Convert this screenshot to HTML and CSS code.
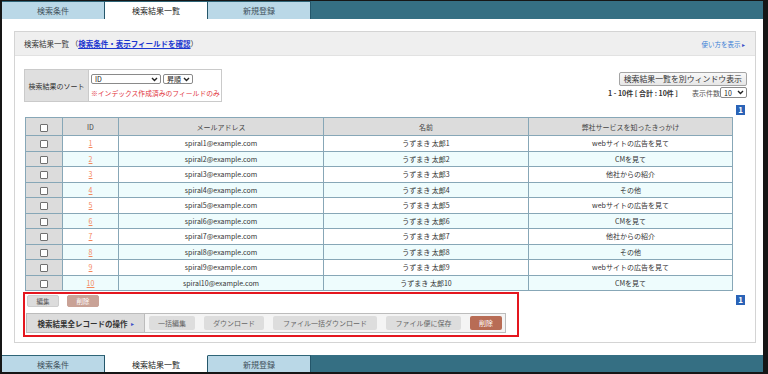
FILE: index.html
```html
<!DOCTYPE html>
<html lang="ja">

<head>
    <meta charset="UTF-8">
    <meta name="viewport" content="width=device-width, initial-scale=1.0">
    <title>検索結果一覧</title>
    <link rel="stylesheet" href="styles.css">
</head>

<body>
    <div id="frame">
        <div class="tabBar top">
            <div class="tab">検索条件</div>
            <div class="tab active">検索結果一覧</div>
            <div class="tab">新規登録</div>
        </div>

        <div id="main">
            <div class="panel">
                <div class="panelHead">
                    <div class="title">検索結果一覧 （<a href="#">検索条件・表示フィールドを確認</a>）</div>
                    <a class="help" href="#">使い方を表示 <span class="tri">▸</span></a>
                </div>

                <div class="panelBody">
                    <div class="topRow">
                        <div class="sortBox">
                            <div class="sortLabel">検索結果のソート</div>
                            <div class="sortField">
                                <div class="selects">
                                    <div class="select wide">ID
                                        <svg width="7" height="5" viewBox="0 0 7 5"><path d="M1 1 L3.5 3.5 L6 1" fill="none" stroke="#222" stroke-width="1.4"/></svg>
                                    </div>
                                    <div class="select narrow">昇順
                                        <svg width="7" height="5" viewBox="0 0 7 5"><path d="M1 1 L3.5 3.5 L6 1" fill="none" stroke="#222" stroke-width="1.4"/></svg>
                                    </div>
                                </div>
                                <div class="note">※インデックス作成済みのフィールドのみ</div>
                            </div>
                        </div>

                        <div class="rightTools">
                            <div class="winBtn">検索結果一覧を別ウィンドウ表示</div>
                            <div class="countRow">
                                <b>1 - 10件 [ 合計 : 10件 ]</b>
                                <span class="perPage">表示件数</span>
                                <div class="select num">10
                                    <svg width="7" height="5" viewBox="0 0 7 5"><path d="M1 1 L3.5 3.5 L6 1" fill="none" stroke="#222" stroke-width="1.4"/></svg>
                                </div>
                            </div>
                        </div>
                    </div>

                    <div class="pager"><span class="pageNo">1</span></div>

                    <table class="result">
                        <tr>
                            <th class="chk"><span class="box"></span></th>
                            <th class="id">ID</th>
                            <th>メールアドレス</th>
                            <th>名前</th>
                            <th>弊社サービスを知ったきっかけ</th>
                        </tr>
                        <tr>
                            <td class="chk"><span class="box"></span></td>
                            <td><a href="#">1</a></td>
                            <td>spiral1@example.com</td>
                            <td>うずまき 太郎1</td>
                            <td>webサイトの広告を見て</td>
                        </tr>
                        <tr class="alt">
                            <td class="chk"><span class="box"></span></td>
                            <td><a href="#">2</a></td>
                            <td>spiral2@example.com</td>
                            <td>うずまき 太郎2</td>
                            <td>CMを見て</td>
                        </tr>
                        <tr>
                            <td class="chk"><span class="box"></span></td>
                            <td><a href="#">3</a></td>
                            <td>spiral3@example.com</td>
                            <td>うずまき 太郎3</td>
                            <td>他社からの紹介</td>
                        </tr>
                        <tr class="alt">
                            <td class="chk"><span class="box"></span></td>
                            <td><a href="#">4</a></td>
                            <td>spiral4@example.com</td>
                            <td>うずまき 太郎4</td>
                            <td>その他</td>
                        </tr>
                        <tr>
                            <td class="chk"><span class="box"></span></td>
                            <td><a href="#">5</a></td>
                            <td>spiral5@example.com</td>
                            <td>うずまき 太郎5</td>
                            <td>webサイトの広告を見て</td>
                        </tr>
                        <tr class="alt">
                            <td class="chk"><span class="box"></span></td>
                            <td><a href="#">6</a></td>
                            <td>spiral6@example.com</td>
                            <td>うずまき 太郎6</td>
                            <td>CMを見て</td>
                        </tr>
                        <tr>
                            <td class="chk"><span class="box"></span></td>
                            <td><a href="#">7</a></td>
                            <td>spiral7@example.com</td>
                            <td>うずまき 太郎7</td>
                            <td>他社からの紹介</td>
                        </tr>
                        <tr class="alt">
                            <td class="chk"><span class="box"></span></td>
                            <td><a href="#">8</a></td>
                            <td>spiral8@example.com</td>
                            <td>うずまき 太郎8</td>
                            <td>その他</td>
                        </tr>
                        <tr>
                            <td class="chk"><span class="box"></span></td>
                            <td><a href="#">9</a></td>
                            <td>spiral9@example.com</td>
                            <td>うずまき 太郎9</td>
                            <td>webサイトの広告を見て</td>
                        </tr>
                        <tr class="alt">
                            <td class="chk"><span class="box"></span></td>
                            <td><a href="#">10</a></td>
                            <td>spiral10@example.com</td>
                            <td>うずまき 太郎10</td>
                            <td>CMを見て</td>
                        </tr>
                    </table>

                    <div class="bottomRow">
                        <div class="redBox">
                            <div class="editRow">
                                <div class="smallBtn">編集</div>
                                <div class="smallBtn off">削除</div>
                            </div>
                            <div class="opsBar">
                                <div class="opsLabel">検索結果全レコードの操作 <span class="tri">▸</span></div>
                                <div class="opsBtns">
                                    <div class="opBtn w1">一括編集</div>
                                    <div class="opBtn w2">ダウンロード</div>
                                    <div class="opBtn w3">ファイル一括ダウンロード</div>
                                    <div class="opBtn w4">ファイル便に保存</div>
                                    <div class="opBtn del">削除</div>
                                </div>
                            </div>
                        </div>
                        <div class="pager low"><span class="pageNo">1</span></div>
                    </div>
                </div>
            </div>
        </div>

        <div class="tabBar bottom">
            <div class="tab">検索条件</div>
            <div class="tab active">検索結果一覧</div>
            <div class="tab">新規登録</div>
        </div>
    </div>
</body>

</html>
```

FILE: styles.css
```css
* {
    margin: 0;
    padding: 0;
    box-sizing: border-box;
}

body {
    font-family: "Noto Sans CJK JP", "Noto Sans", sans-serif;
    color: #333;
    background: #161616;
}

#frame {
    width: 768px;
    height: 374px;
    border-style: solid;
    border-color: #161616;
    border-width: 1px 5px 2px 2px;
    background: #fff;
    display: flex;
    flex-direction: column;
}

/* tabs */
.tabBar {
    height: 18px;
    flex-shrink: 0;
    background-color: #356f83;
    display: flex;
}

.tabBar.bottom {
    height: 17px;
}

.tab {
    width: 103px;
    border-right: 1px solid #24566a;
    background-color: #bad8e7;
    color: #3e4f5a;
    font-size: 8px;
    display: flex;
    align-items: center;
    justify-content: center;
}

.tabBar.top .tab {
    border-top: 1px solid #2f6578;
}

.tabBar.bottom .tab {
    border-top: 1px solid #2f6578;
}

.tab.active {
    background-color: #fff;
    color: #222;
}

.tabBar.bottom .tab.active {
    border-top-color: #fff;
}

#main {
    flex: 1;
    padding: 12px 7px 12px 12px;
}

.panel {
    height: 100%;
    border: 1px solid #d4d4d4;
}

.panelHead {
    height: 24px;
    background-color: #efefef;
    border-bottom: 1px solid #e2e2e2;
    display: flex;
    justify-content: space-between;
    align-items: center;
    padding: 0 10px 0 9px;
}

.title {
    font-size: 7.5px;
    color: #333;
}

.title a {
    color: #1b36cf;
    font-weight: bold;
}

.help {
    font-size: 6.5px;
    color: #3b7fd6;
    text-decoration: none;
}

.help .tri {
    color: #3a4fc8;
    font-size: 6px;
}

.panelBody {
    padding: 13px 8px 0 9px;
}

/* sort + count */
.topRow {
    display: flex;
    justify-content: space-between;
    height: 33px;
}

.sortBox {
    width: 198px;
    height: 33px;
    border: 1px solid #cacaca;
    display: flex;
}

.sortLabel {
    width: 64px;
    background-color: #dfdfdf;
    border-right: 1px solid #cacaca;
    font-size: 7px;
    color: #333;
    display: flex;
    align-items: center;
    justify-content: center;
}

.sortField {
    padding: 4px 0 0 2px;
}

.selects {
    display: flex;
    gap: 2px;
}

.select {
    height: 10px;
    border: 1px solid #8a8a8a;
    border-radius: 2px;
    background: #fff;
    font-size: 7px;
    line-height: 8px;
    padding-left: 3px;
    padding-right: 2px;
    display: flex;
    justify-content: space-between;
    align-items: center;
    color: #222;
}

.select.wide {
    width: 70px;
}

.select.narrow {
    width: 30px;
}

.note {
    margin-top: 4px;
    font-size: 6.8px;
    color: #e2343c;
    white-space: nowrap;
}

.rightTools {
    display: flex;
    flex-direction: column;
    align-items: flex-end;
    padding-top: 3px;
}

.winBtn {
    height: 14px;
    border: 1px solid #a4a4a4;
    border-radius: 2px;
    background: linear-gradient(#f8f8f8, #e6e6e6);
    font-size: 7.9px;
    line-height: 12px;
    padding: 0 4px;
    color: #333;
}

.countRow {
    margin-top: 1px;
    display: flex;
    align-items: center;
    font-size: 7px;
}

.countRow b {
    color: #333;
}

.perPage {
    margin-left: 14px;
    color: #555;
}

.select.num {
    width: 27px;
    height: 11px;
}

.pager {
    display: flex;
    justify-content: flex-end;
    margin-top: 3px;
    height: 10px;
}

.pageNo {
    width: 9px;
    height: 10px;
    margin-right: 2px;
    background-color: #2a63b7;
    color: #fff;
    font-size: 8px;
    font-weight: bold;
    line-height: 10px;
    text-align: center;
}

/* table */
.result {
    margin: 2px 0 0 1px;
    width: 708px;
    border-collapse: collapse;
    font-size: 7px;
    color: #333;
}

.result th,
.result td {
    border: 1px solid #87a7b7;
    text-align: center;
    padding: 0;
    font-weight: normal;
}

.result th {
    height: 18px;
    background-color: #dcdcdc;
    color: #444;
}

.result td {
    height: 15.5px;
}

.result .chk {
    width: 37px;
    background-color: #dcdcdc;
}

.result .id {
    width: 56px;
}

.result th:nth-child(3),
.result th:nth-child(4) {
    width: 205px;
}

.result tr.alt td {
    background-color: #eefcfd;
}

.result tr.alt td.chk {
    background-color: #dcdcdc;
}

.result a {
    color: #f4875c;
}

.box {
    display: inline-block;
    width: 8px;
    height: 8px;
    border: 1px solid #707070;
    border-radius: 1px;
    background: #fff;
    vertical-align: middle;
}

/* operations */
.bottomRow {
    display: flex;
    justify-content: space-between;
    align-items: flex-start;
    margin: 1px 0 0 -1px;
}

.redBox {
    width: 496px;
    height: 45px;
    border: 2px solid #e4161e;
    padding: 1px 2px;
}

.editRow {
    display: flex;
    gap: 8px;
}

.smallBtn {
    width: 32px;
    height: 12px;
    border-radius: 2px;
    background-color: #dcdcdc;
    border: 1px solid #cdcdcd;
    color: #555;
    font-size: 6.5px;
    line-height: 10px;
    text-align: center;
}

.smallBtn.off {
    background-color: #c9a296;
    border-color: #c9a296;
    color: #fff;
}

.opsBar {
    margin: 6px 0 0 -1px;
    width: 480px;
    height: 20px;
    border: 1px solid #bcbcbc;
    background-color: #f4f4f4;
    display: flex;
}

.opsLabel {
    width: 118px;
    background-color: #dcdcdc;
    border-right: 1px solid #bcbcbc;
    font-size: 7.5px;
    font-weight: bold;
    color: #333;
    display: flex;
    align-items: center;
    justify-content: center;
    gap: 3px;
}

.opsLabel .tri {
    color: #3a4fc8;
    font-size: 6px;
    font-weight: normal;
}

.opsBtns {
    display: flex;
    align-items: center;
    padding-left: 4px;
    gap: 9px;
}

.opBtn {
    height: 14px;
    border-radius: 2px;
    background-color: #dddddd;
    color: #666;
    font-size: 7px;
    line-height: 14px;
    text-align: center;
}

.opBtn.w1 {
    width: 46px;
}

.opBtn.w2 {
    width: 60px;
}

.opBtn.w3 {
    width: 104px;
}

.opBtn.w4 {
    width: 75px;
}

.opBtn.del {
    width: 32px;
    background-color: #b86c55;
    color: #fff;
}

.pager.low {
    margin-top: 3px;
}
```
